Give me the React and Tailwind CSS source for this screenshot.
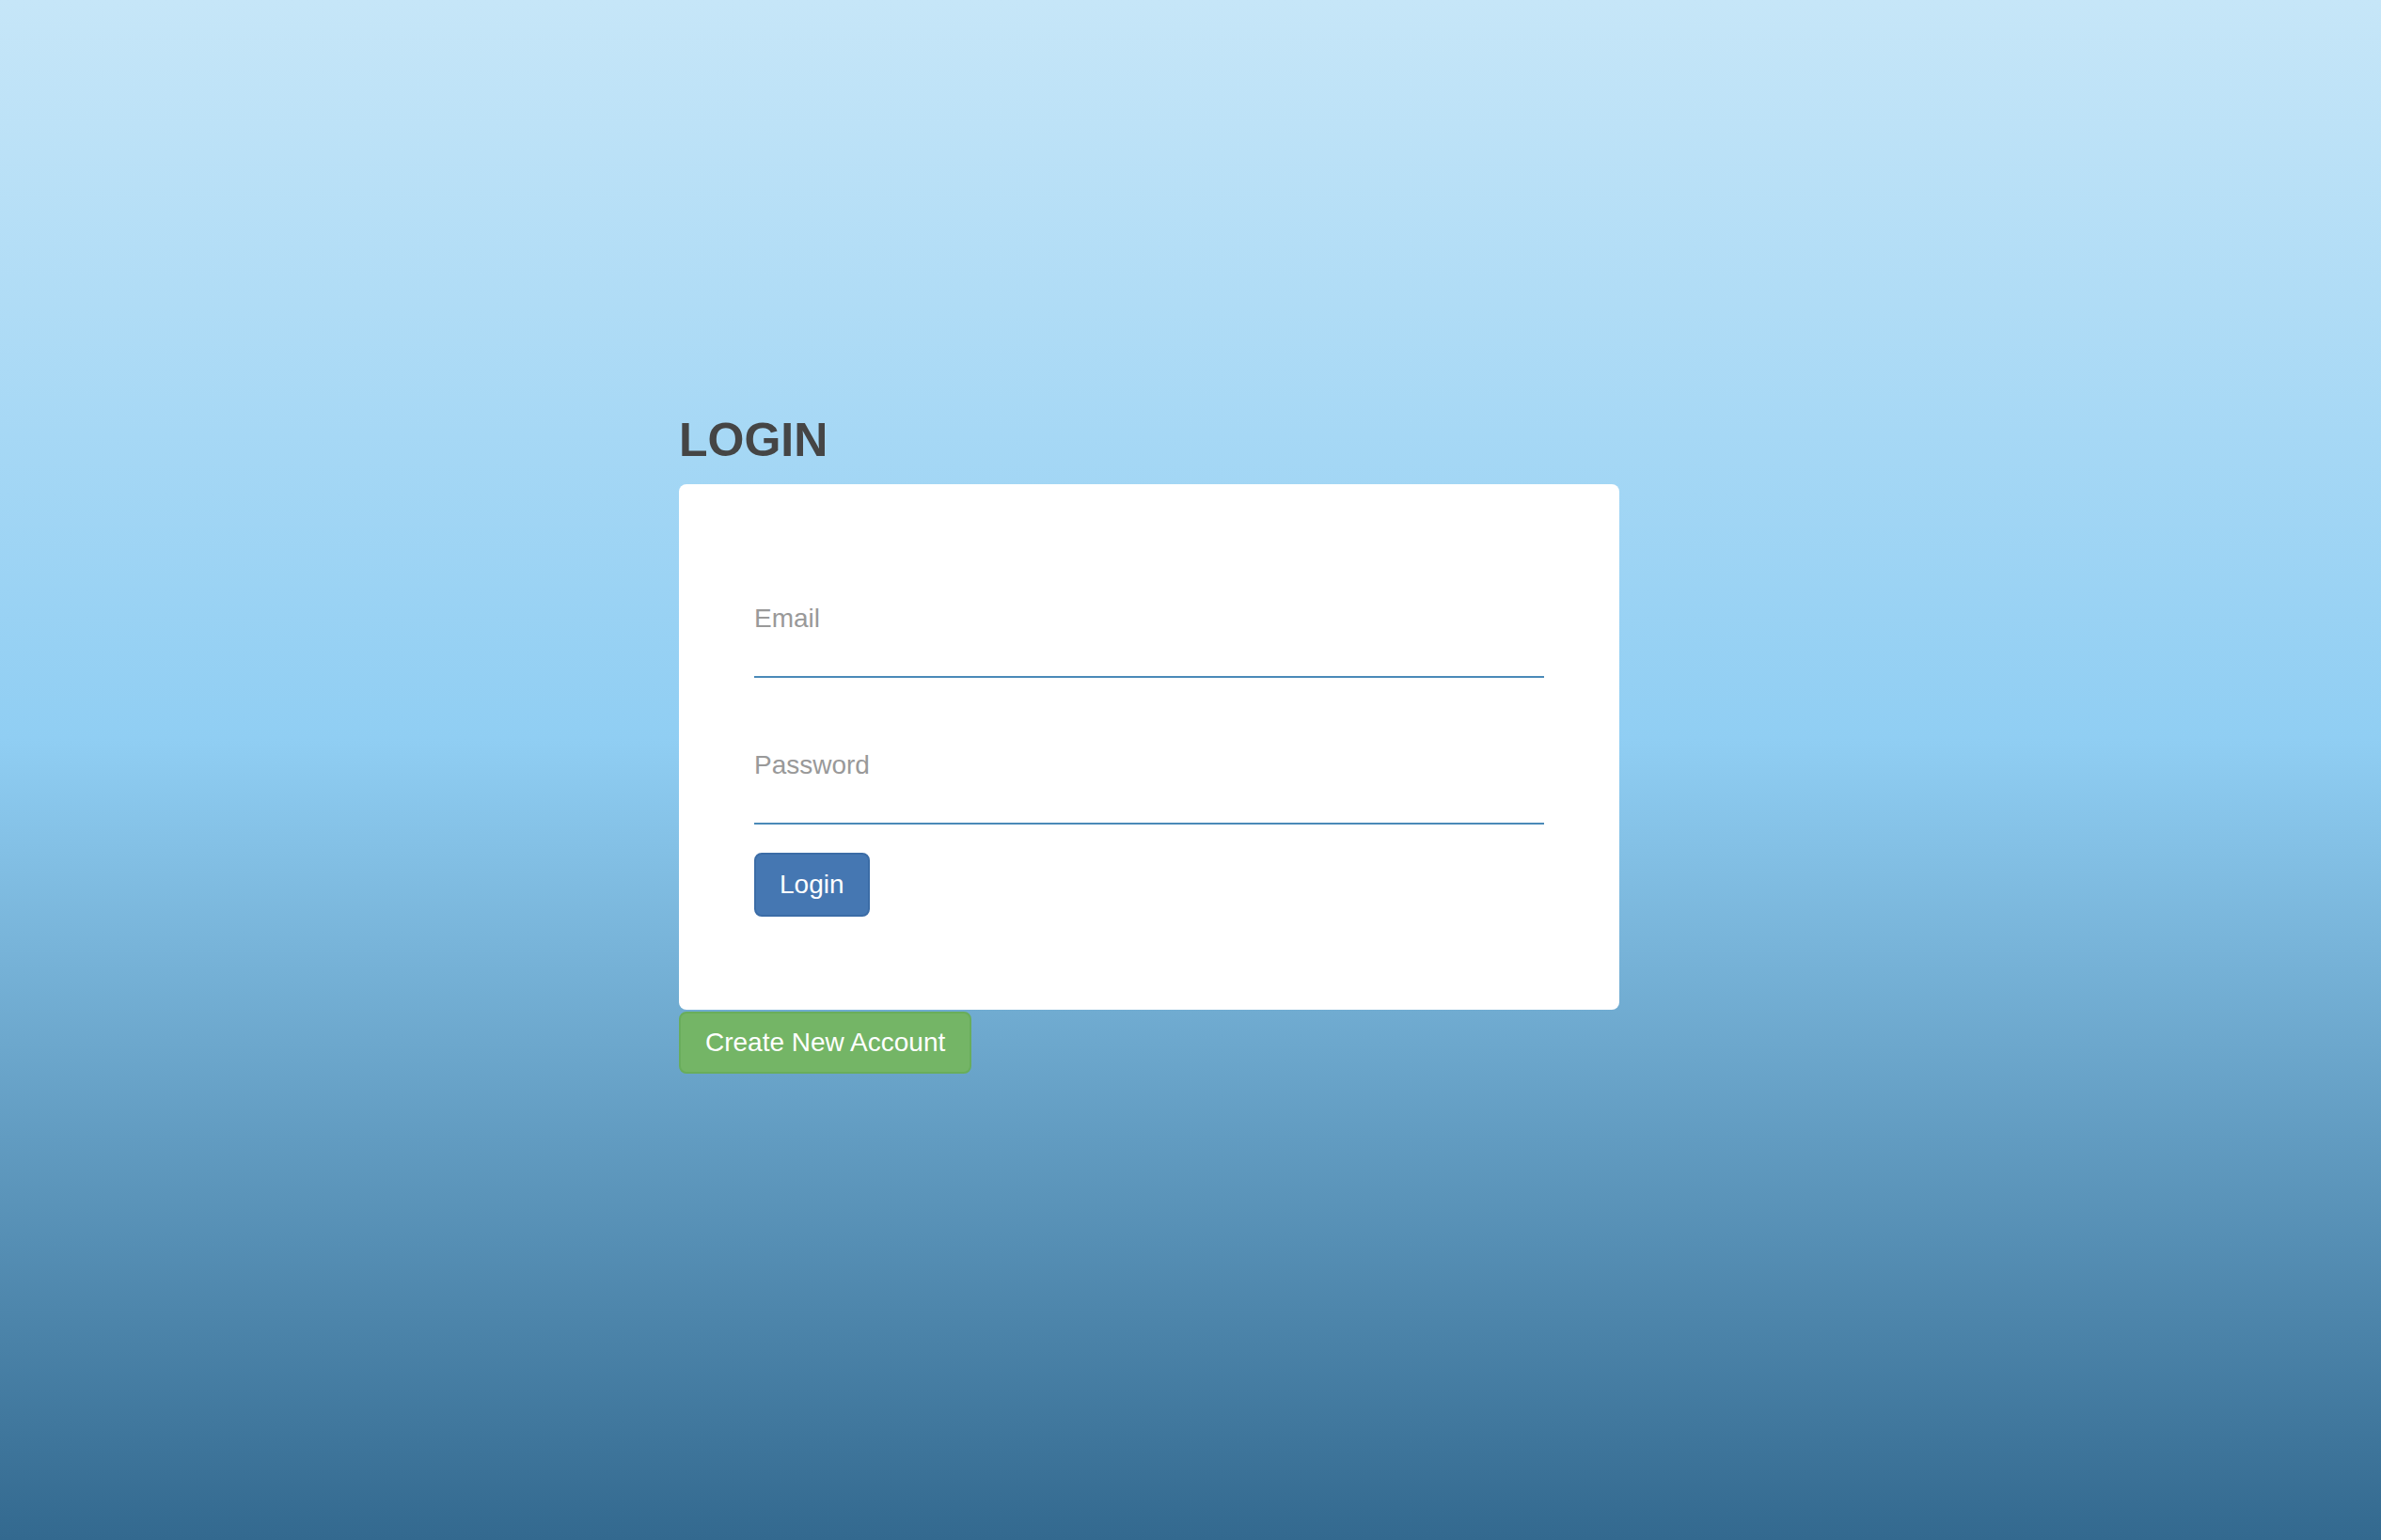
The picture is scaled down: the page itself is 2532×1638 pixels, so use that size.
// App.jsx
import { useState } from "react";

export default function App() {
  const [email, setEmail] = useState("");
  const [password, setPassword] = useState("");

  return (
    <div className="min-h-screen w-full bg-[linear-gradient(to_bottom,#c6e6f8_0%,#90cef3_48%,#33698f_100%)] font-['Liberation_Sans',Arial,sans-serif]">
      <div className="mx-auto w-[1088px] pt-[441px] pb-10">
        <h1 className="text-[50px] leading-[55px] font-bold text-[#454545] mb-[19px]">
          LOGIN
        </h1>

        <form
          onSubmit={(e) => e.preventDefault()}
          className="w-[1000px] bg-white rounded-[8px] px-[80px] pt-[126px] pb-[99px] flex flex-col"
        >
          <input
            type="email"
            value={email}
            onChange={(e) => setEmail(e.target.value)}
            placeholder="Email"
            className="block w-full h-[80px] pt-0 pb-[45px] px-0 text-[28px] leading-8 text-[#333] placeholder:text-[#999] border-0 border-b-2 border-[#4a8ab8] outline-none bg-transparent"
          />
          <input
            type="password"
            value={password}
            onChange={(e) => setPassword(e.target.value)}
            placeholder="Password"
            className="block w-full h-[80px] mt-[76px] pt-0 pb-[45px] px-0 text-[28px] leading-8 text-[#333] placeholder:text-[#999] border-0 border-b-2 border-[#4a8ab8] outline-none bg-transparent"
          />
          <div className="mt-[30px]">
            <button
              type="submit"
              className="h-[68px] px-[25px] rounded-[8px] border-2 border-[#3b6ca6] bg-[#4577b2] text-white text-[28px] leading-10"
            >
              Login
            </button>
          </div>
        </form>

        <button
          type="button"
          className="mt-[2px] h-[66px] px-[26px] rounded-[8px] border-2 border-[#69ad5b] bg-[#74b566] text-white text-[28px] leading-10"
        >
          Create New Account
        </button>
      </div>
    </div>
  );
}
